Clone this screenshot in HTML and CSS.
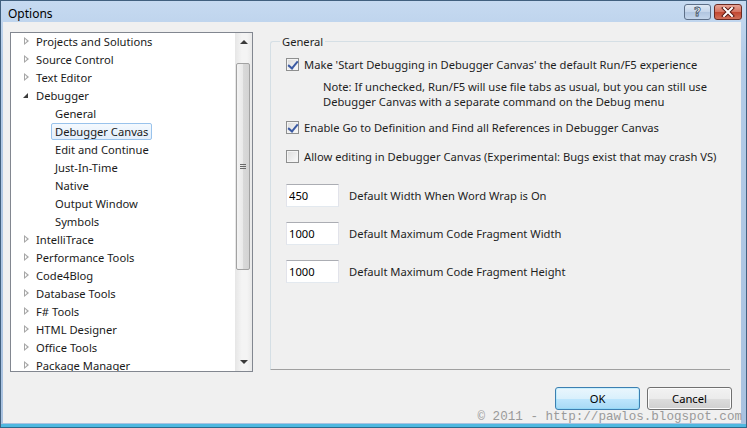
FILE: index.html
```html
<!DOCTYPE html>
<html lang="en">
<head>
  <meta charset="UTF-8" />
  <title>Options</title>
  <link rel="stylesheet" href="styles.css">
</head>
<body>

  <div class="window">
    <div class="titlebar">
      <span class="title">Options</span>
      <div class="caption-buttons">
        <button class="cap help">?</button>
        <button class="cap close">
          <svg width="14" height="10" viewBox="0 0 14 10">
            <path d="M3 1 L11 9 M11 1 L3 9" stroke="#5a1a14" stroke-width="4" stroke-linecap="square"/>
            <path d="M3 1 L11 9 M11 1 L3 9" stroke="#fff" stroke-width="2" stroke-linecap="square"/>
          </svg>
        </button>
      </div>
    </div>

    <div class="client">
      <div class="main">
        <div class="tree">
          <ul class="tree-list">
            <li class="node"><span class="twisty closed"></span><span class="label">Projects and Solutions</span></li>
            <li class="node"><span class="twisty closed"></span><span class="label">Source Control</span></li>
            <li class="node"><span class="twisty closed"></span><span class="label">Text Editor</span></li>
            <li class="node"><span class="twisty open"></span><span class="label">Debugger</span></li>
            <li class="node child"><span class="label">General</span></li>
            <li class="node child"><span class="label selected">Debugger Canvas</span></li>
            <li class="node child"><span class="label">Edit and Continue</span></li>
            <li class="node child"><span class="label">Just-In-Time</span></li>
            <li class="node child"><span class="label">Native</span></li>
            <li class="node child"><span class="label">Output Window</span></li>
            <li class="node child"><span class="label">Symbols</span></li>
            <li class="node"><span class="twisty closed"></span><span class="label">IntelliTrace</span></li>
            <li class="node"><span class="twisty closed"></span><span class="label">Performance Tools</span></li>
            <li class="node"><span class="twisty closed"></span><span class="label">Code4Blog</span></li>
            <li class="node"><span class="twisty closed"></span><span class="label">Database Tools</span></li>
            <li class="node"><span class="twisty closed"></span><span class="label">F# Tools</span></li>
            <li class="node"><span class="twisty closed"></span><span class="label">HTML Designer</span></li>
            <li class="node"><span class="twisty closed"></span><span class="label">Office Tools</span></li>
            <li class="node"><span class="twisty closed"></span><span class="label">Package Manager</span></li>
          </ul>
          <div class="scrollbar">
            <div class="arrow up"></div>
            <div class="track">
              <div class="thumb"><span class="grip"></span></div>
            </div>
            <div class="arrow down"></div>
          </div>
        </div>

        <fieldset class="group">
          <legend>General</legend>

          <div class="option">
            <span class="checkbox checked"></span>
            <span>Make 'Start Debugging in Debugger Canvas' the default Run/F5 experience</span>
          </div>
          <div class="note">
            Note: If unchecked, Run/F5 will use file tabs as usual, but you can still use<br>
            Debugger Canvas with a separate command on the Debug menu
          </div>

          <div class="option second">
            <span class="checkbox checked"></span>
            <span>Enable Go to Definition and Find all References in Debugger Canvas</span>
          </div>

          <div class="option third">
            <span class="checkbox"></span>
            <span>Allow editing in Debugger Canvas (Experimental: Bugs exist that may crash VS)</span>
          </div>

          <div class="field first">
            <input class="textbox" type="text" value="450">
            <span class="field-label">Default Width When Word Wrap is On</span>
          </div>
          <div class="field">
            <input class="textbox" type="text" value="1000">
            <span class="field-label">Default Maximum Code Fragment Width</span>
          </div>
          <div class="field">
            <input class="textbox" type="text" value="1000">
            <span class="field-label">Default Maximum Code Fragment Height</span>
          </div>
        </fieldset>
      </div>

      <div class="footer">
        <button class="btn default">OK</button>
        <button class="btn">Cancel</button>
      </div>
    </div>

    <div class="watermark">© 2011 - http://pawlos.blogspot.com</div>
  </div>

</body>
</html>
```

FILE: styles.css
```css
* {
  box-sizing: border-box;
}

body {
  margin: 0;
  font-family: "Segoe UI", "Noto Sans", sans-serif;
  font-size: 11.2px;
  color: #000;
  background: #fff;
}

.window {
  position: relative;
  width: 747px;
  height: 428px;
  display: flex;
  flex-direction: column;
  border: 1px solid #41607f;
  border-bottom: 1px solid #2b6a8c;
  background: linear-gradient(#c6daf1, #b3cbe7 60px, #a9c2e0);
  box-shadow: inset 0 -3px 0 #4fb8e0;
}

/* title bar */

.titlebar {
  height: 21px;
  display: flex;
  align-items: center;
  padding: 3px 4px 0 7px;
}

.title {
  font-size: 12px;
  color: #000;
}

.caption-buttons {
  margin-left: auto;
  align-self: flex-start;
  display: flex;
  gap: 3px;
}

.cap {
  height: 16px;
  padding: 0;
  border: 1px solid #5d6f88;
  border-radius: 3px;
  display: flex;
  align-items: center;
  justify-content: center;
}

.cap.help {
  width: 27px;
  background: linear-gradient(#dfe9f5, #c3d4ea 50%, #b0c5e0 51%, #c4d6ec);
  font-family: "DejaVu Sans", sans-serif;
  font-weight: bold;
  font-size: 12px;
  color: #fff;
  -webkit-text-stroke: 0.8px #3d4f66;
  line-height: 14px;
}

.cap.close {
  width: 28px;
  border-color: #6b2a22;
  background: linear-gradient(#e8a496, #d4715f 50%, #c2452f 51%, #d1705a);
}

/* client area */

.client {
  flex: 1;
  margin: 0 5px 4px 2px;
  background: #f0f0f0;
  display: flex;
  flex-direction: column;
}

.main {
  height: 350px;
  display: flex;
  align-items: flex-start;
}

/* tree view */

.tree {
  margin: 10px 0 0 7px;
  width: 243px;
  height: 340px;
  border: 1px solid #828790;
  background: #fff;
  display: flex;
}

.tree-list {
  flex: 1;
  list-style: none;
  margin: -1px 0 0;
  padding: 0;
  overflow: hidden;
  color: #1a1a1a;
}

.node {
  height: 18px;
  display: flex;
  align-items: center;
  padding-left: 12px;
  white-space: nowrap;
}

.node.child {
  padding-left: 40px;
}

.twisty {
  width: 9px;
  height: 18px;
  position: relative;
}

.twisty.closed::before {
  content: "";
  position: absolute;
  left: 1px;
  top: 5px;
  border-left: 5px solid #a6a6a6;
  border-top: 4px solid transparent;
  border-bottom: 4px solid transparent;
}

.twisty.closed::after {
  content: "";
  position: absolute;
  left: 2px;
  top: 7px;
  border-left: 2px solid #fff;
  border-top: 2px solid transparent;
  border-bottom: 2px solid transparent;
}

.twisty.open::before {
  content: "";
  position: absolute;
  left: 0;
  top: 7px;
  border-right: 5px solid #3c3c3c;
  border-top: 5px solid transparent;
}

.label {
  padding: 0 3px;
  border: 1px solid transparent;
  border-radius: 2px;
  line-height: 15px;
}

.label.selected {
  border-color: #99c3ec;
  background: linear-gradient(#f4f9fe, #e2eefb);
}

/* scrollbar */

.scrollbar {
  width: 17px;
  display: flex;
  flex-direction: column;
  background: linear-gradient(to right, #e6e6e6, #f4f4f4 40%, #f4f4f4 70%, #e9e9e9);
}

.arrow {
  height: 17px;
  position: relative;
}

.arrow.up::before {
  content: "";
  position: absolute;
  left: 5px;
  top: 7px;
  border-bottom: 4px solid #3a3a3a;
  border-left: 4px solid transparent;
  border-right: 4px solid transparent;
}

.arrow.down::before {
  content: "";
  position: absolute;
  left: 5px;
  top: 6px;
  border-top: 4px solid #3a3a3a;
  border-left: 4px solid transparent;
  border-right: 4px solid transparent;
}

.track {
  flex: 1;
}

.thumb {
  margin: 13px 2px 0 1px;
  height: 207px;
  border: 1px solid #a2a2a2;
  border-radius: 2px;
  background: linear-gradient(to right, #f3f3f3, #e9e9e9 50%, #d9d9d9 51%, #d3d3d3);
  display: flex;
  align-items: center;
  justify-content: center;
}

.grip {
  width: 6px;
  height: 5px;
  border-top: 1px solid #6a6a6a;
  border-bottom: 1px solid #6a6a6a;
  position: relative;
}

.grip::after {
  content: "";
  position: absolute;
  left: 0;
  right: 0;
  top: 1px;
  border-top: 1px solid #6a6a6a;
}

/* options group */

.group {
  flex: 1;
  min-width: 0;
  height: 336px;
  margin: 12px 11px 0 17px;
  padding: 0 0 0 15px;
  border: 1px solid #d5dfe5;
  border-right: none;
  border-bottom-color: #a0a0a0;
  border-radius: 3px 0 0 0;
  color: #1e1e1e;
}

.group legend {
  margin-left: -6px;
  padding: 0 2px;
  line-height: 15px;
}

.option {
  display: flex;
  align-items: center;
  gap: 5px;
  line-height: 15px;
  margin-top: 8px;
  white-space: nowrap;
}

.option.second {
  margin-top: 11px;
}

.option.third {
  margin-top: 14px;
}

.checkbox {
  width: 13px;
  height: 13px;
  flex: none;
  border: 1px solid #8e8f8f;
  background: linear-gradient(135deg, #dcdcdc, #fbfbfb);
  box-shadow: inset 0 0 0 1px #f4f4f4;
  position: relative;
}

.checkbox.checked::after {
  content: "";
  position: absolute;
  left: 3px;
  top: 0;
  width: 4px;
  height: 8px;
  border-right: 2px solid #3b5aa3;
  border-bottom: 2px solid #3b5aa3;
  transform: rotate(40deg);
}

.note {
  margin-top: 7px;
  padding-left: 37px;
  line-height: 15px;
  white-space: nowrap;
}

.field {
  display: flex;
  align-items: center;
  margin-top: 15px;
}

.field.first {
  margin-top: 20px;
}

.textbox {
  width: 53px;
  height: 23px;
  padding: 0 2px;
  font: inherit;
  color: #000;
  background: #fff;
  border: 1px solid #e2e3ea;
  border-top-color: #abadb3;
  border-bottom-color: #e3e9ef;
  outline: none;
}

.field-label {
  margin-left: 10px;
}

/* footer buttons */

.footer {
  display: flex;
  justify-content: flex-end;
  gap: 7px;
  padding: 15px 9px 0 0;
}

.btn {
  width: 85px;
  height: 23px;
  font: inherit;
  color: #000;
  border: 1px solid #707070;
  border-radius: 3px;
  background: linear-gradient(#f2f2f2, #ebebeb 50%, #dddddd 51%, #cfcfcf);
  box-shadow: inset 0 0 0 1px #fcfcfc;
}

.btn.default {
  border-color: #3c7fb1;
  background: linear-gradient(#eaf6fd, #d9f0fc 50%, #bee6fd 51%, #a7d9f5);
  box-shadow: inset 0 0 0 1px #48d9fd33;
}

.watermark {
  position: absolute;
  right: 4px;
  bottom: 3px;
  font-family: "Liberation Mono", monospace;
  font-size: 12.6px;
  color: #9a9a9a;
}
```
